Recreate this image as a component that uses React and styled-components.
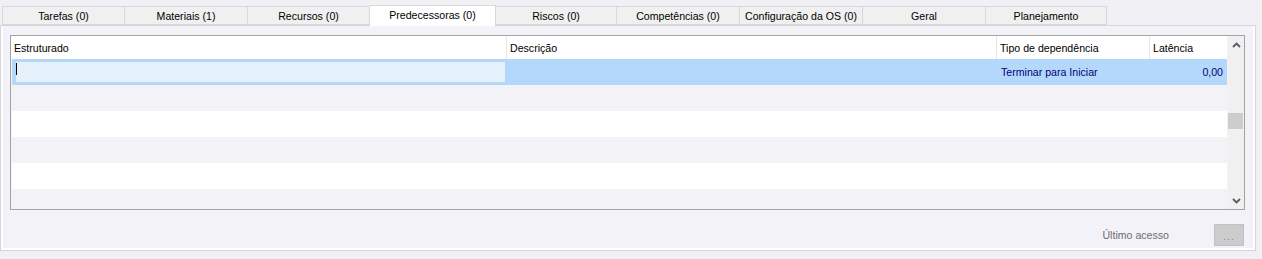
import React from "react";
import styled, { createGlobalStyle } from "styled-components";

const GlobalStyle = createGlobalStyle`
  html, body {
    margin: 0;
    padding: 0;
    background: #f0f0f5;
  }
  body {
    font-family: "Liberation Sans", Arial, sans-serif;
    font-size: 10.6px;
    color: #000;
  }
`;

const tabs = [
  { label: "Tarefas (0)", width: 123 },
  { label: "Materiais (1)", width: 124 },
  { label: "Recursos (0)", width: 123 },
  { label: "Predecessoras (0)", width: 127, active: true },
  { label: "Riscos (0)", width: 122 },
  { label: "Competências (0)", width: 124 },
  { label: "Configuração da OS (0)", width: 124 },
  { label: "Geral", width: 124 },
  { label: "Planejamento", width: 122 },
];

const columns = [
  { title: "Estruturado", width: 496 },
  { title: "Descrição", width: 490 },
  { title: "Tipo de dependência", width: 153 },
  { title: "Latência", width: 73 },
];

const emptyRows = [
  { alt: true, height: 26 },
  { alt: false, height: 26 },
  { alt: true, height: 26 },
  { alt: false, height: 26 },
  { alt: true, height: 20 },
];

export default function App() {
  return (
    <Screen>
      <GlobalStyle />
      <TabBar>
        {tabs.map((t) => (
          <Tab key={t.label} $width={t.width} $active={t.active}>
            {t.label}
          </Tab>
        ))}
      </TabBar>
      <Panel>
        <Grid>
          <GridBody>
            <HeaderRow>
              {columns.map((c) => (
                <HeaderCell key={c.title} $width={c.width}>
                  {c.title}
                </HeaderCell>
              ))}
            </HeaderRow>
            <SelectedRow>
              <Cell $width={496}>
                <Editor>
                  <Caret />
                </Editor>
              </Cell>
              <Cell $width={490} />
              <Cell $width={153}>
                <DataText>Terminar para Iniciar</DataText>
              </Cell>
              <Cell $width={73} $right>
                <DataText>0,00</DataText>
              </Cell>
            </SelectedRow>
            {emptyRows.map((r, i) => (
              <Row key={i} $alt={r.alt} $height={r.height} />
            ))}
          </GridBody>
          <ScrollBar>
            <ArrowBtn>
              <svg width="9" height="6" viewBox="0 0 9 6">
                <path d="M1 5 L4.5 1.5 L8 5" fill="none" stroke="#5a5a5a" strokeWidth="1.8" />
              </svg>
            </ArrowBtn>
            <Track>
              <Thumb />
            </Track>
            <ArrowBtn>
              <svg width="9" height="6" viewBox="0 0 9 6">
                <path d="M1 1 L4.5 4.5 L8 1" fill="none" stroke="#5a5a5a" strokeWidth="1.8" />
              </svg>
            </ArrowBtn>
          </ScrollBar>
        </Grid>
        <Footer>
          <FooterLabel>Último acesso</FooterLabel>
          <DotsButton>...</DotsButton>
        </Footer>
      </Panel>
    </Screen>
  );
}

const Screen = styled.div`
  width: 1262px;
  height: 259px;
  overflow: hidden;
  background: #f0f0f5;
`;

const TabBar = styled.div`
  display: flex;
  align-items: flex-end;
  height: 25px;
  padding-left: 2px;
  position: relative;
  z-index: 1;
`;

const Tab = styled.div`
  box-sizing: border-box;
  width: ${(p) => p.$width}px;
  height: ${(p) => (p.$active ? 21 : 19)}px;
  margin-left: -1px;
  margin-bottom: ${(p) => (p.$active ? -1 : 0)}px;
  &:first-child {
    margin-left: 0;
  }
  display: flex;
  align-items: center;
  justify-content: center;
  padding-bottom: ${(p) => (p.$active ? 2 : 0)}px;
  background: ${(p) => (p.$active ? "#ffffff" : "#f0f0f0")};
  border: 1px solid #d9d9d9;
  border-bottom: ${(p) => (p.$active ? "none" : "1px solid #d9d9d9")};
  white-space: nowrap;
  position: relative;
  z-index: ${(p) => (p.$active ? 2 : 1)};
`;

const Panel = styled.div`
  box-sizing: border-box;
  width: 1256px;
  height: 226px;
  border: 1px solid #d6d6d6;
  background: #f2f2f8;
  box-shadow: inset 2px 0 #ffffff, inset -2px 0 #ffffff, inset 0 -2px #ffffff;
  padding: 9px 10px 0 9px;
  display: flex;
  flex-direction: column;
`;

const Grid = styled.div`
  box-sizing: border-box;
  width: 1235px;
  height: 176px;
  border: 1px solid #a3a3a3;
  background: #f2f2f7;
  display: flex;
`;

const GridBody = styled.div`
  width: 1216px;
  display: flex;
  flex-direction: column;
  overflow: hidden;
`;

const HeaderRow = styled.div`
  display: flex;
  height: 23px;
  background: #ffffff;
  flex-shrink: 0;
`;

const HeaderCell = styled.div`
  box-sizing: border-box;
  width: ${(p) => p.$width}px;
  flex-shrink: 0;
  padding-left: 3px;
  display: flex;
  align-items: center;
  border-right: 1px solid #e6e6e6;
  &:last-child {
    border-right: none;
  }
`;

const SelectedRow = styled.div`
  display: flex;
  height: 26px;
  flex-shrink: 0;
  background: #b4d8fb;
  margin-left: 1px;
`;

const Cell = styled.div`
  box-sizing: border-box;
  width: ${(p) => p.$width}px;
  flex-shrink: 0;
  display: flex;
  align-items: center;
  justify-content: ${(p) => (p.$right ? "flex-end" : "flex-start")};
  padding: ${(p) => (p.$right ? "0 1px 0 0" : "0 0 0 3px")};
`;

const Editor = styled.div`
  flex: 1;
  align-self: stretch;
  margin: 3px 3px 3px 1px;
  background: #e5f1fb;
  display: flex;
  align-items: center;
`;

const Caret = styled.span`
  width: 1px;
  height: 12px;
  background: #000;
  margin-top: -6px;
`;

const DataText = styled.span`
  color: #000080;
`;

const Row = styled.div`
  height: ${(p) => p.$height}px;
  flex-shrink: 0;
  background: ${(p) => (p.$alt ? "#f2f2f7" : "#ffffff")};
  margin-left: 1px;
`;

const ScrollBar = styled.div`
  width: 16px;
  margin-left: 1px;
  background: #f0f0f0;
  display: flex;
  flex-direction: column;
`;

const ArrowBtn = styled.div`
  height: 17px;
  display: flex;
  align-items: center;
  justify-content: center;
`;

const Track = styled.div`
  flex: 1;
  padding-top: 60px;
`;

const Thumb = styled.div`
  height: 16px;
  width: 15px;
  background: #cdcdcd;
`;

const Footer = styled.div`
  display: flex;
  align-items: center;
  justify-content: flex-end;
  height: 32px;
  margin-top: 10px;
  width: 1234px;
`;

const FooterLabel = styled.span`
  color: #6d6d6d;
  margin-right: 45px;
`;

const DotsButton = styled.div`
  box-sizing: border-box;
  width: 30px;
  height: 22px;
  background: #cccccc;
  border: 1px solid #c2c2c2;
  color: #8a8a8a;
  display: flex;
  align-items: flex-end;
  justify-content: center;
  padding-bottom: 3px;
  font-size: 10px;
  letter-spacing: 1px;
`;
